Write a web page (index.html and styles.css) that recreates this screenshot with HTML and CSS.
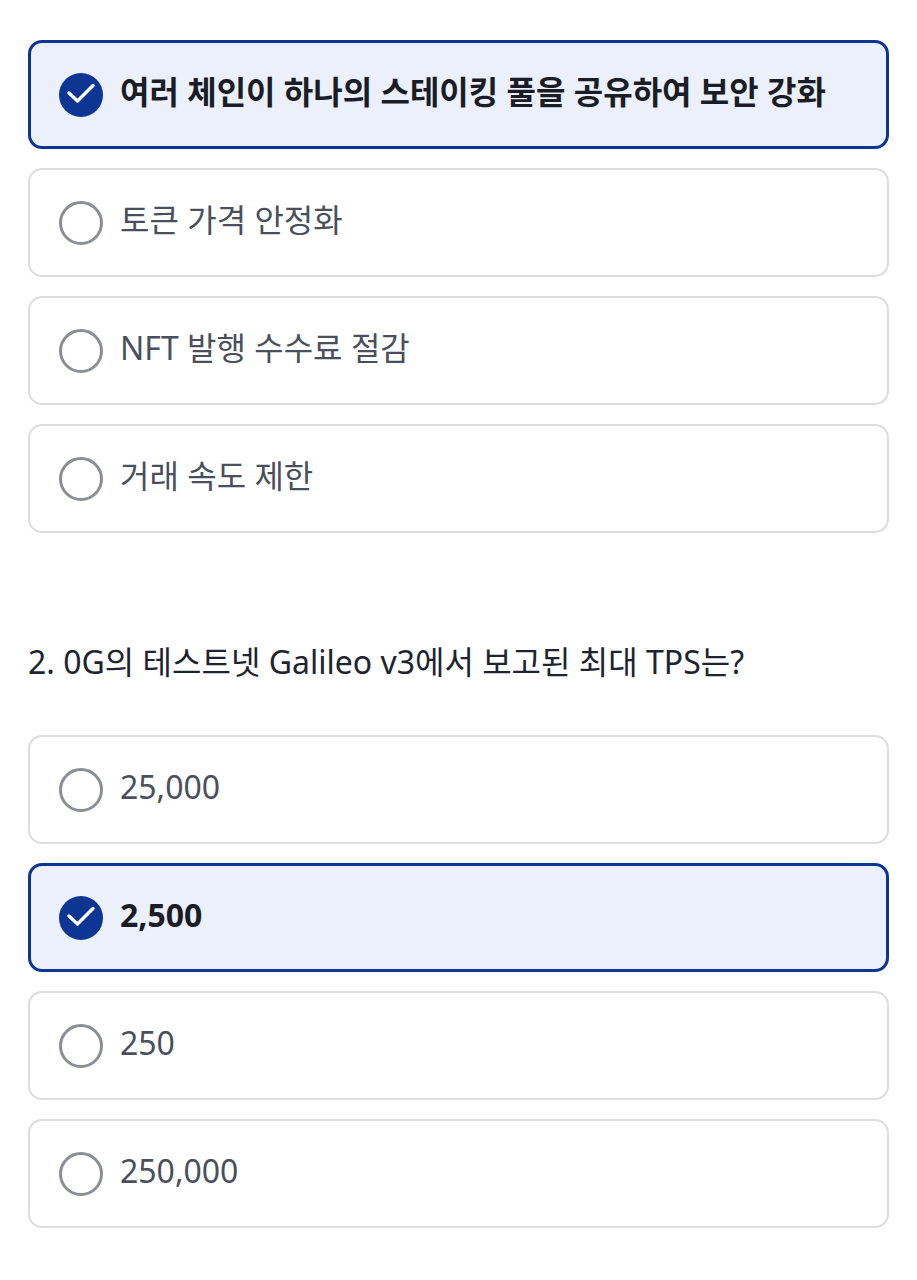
FILE: index.html
```html
<!DOCTYPE html>
<html lang="ko">
<head>
<meta charset="utf-8">
<link rel="stylesheet" href="styles.css">
</head>
<body>
<main class="quiz">
  <section class="question">
    <div class="options">
      <div class="option selected">
        <span class="mark checked"><svg viewBox="0 0 44 44"><circle cx="22" cy="22" r="22" fill="#0c3594"/><path d="M10 20 L18.5 28 L34 12.5" fill="none" stroke="#fff" stroke-width="3.4" stroke-linecap="round" stroke-linejoin="round"/></svg></span>
        <span class="label">여러 체인이 하나의 스테이킹 풀을 공유하여 보안 강화</span>
      </div>
      <div class="option">
        <span class="mark"></span>
        <span class="label">토큰 가격 안정화</span>
      </div>
      <div class="option">
        <span class="mark"></span>
        <span class="label">NFT 발행 수수료 절감</span>
      </div>
      <div class="option">
        <span class="mark"></span>
        <span class="label">거래 속도 제한</span>
      </div>
    </div>
  </section>
  <section class="question">
    <h2 class="title">2. 0G의 테스트넷 Galileo v3에서 보고된 최대 TPS는?</h2>
    <div class="options">
      <div class="option">
        <span class="mark"></span>
        <span class="label">25,000</span>
      </div>
      <div class="option selected">
        <span class="mark checked"><svg viewBox="0 0 44 44"><circle cx="22" cy="22" r="22" fill="#0c3594"/><path d="M10 20 L18.5 28 L34 12.5" fill="none" stroke="#fff" stroke-width="3.4" stroke-linecap="round" stroke-linejoin="round"/></svg></span>
        <span class="label">2,500</span>
      </div>
      <div class="option">
        <span class="mark"></span>
        <span class="label">250</span>
      </div>
      <div class="option">
        <span class="mark"></span>
        <span class="label">250,000</span>
      </div>
    </div>
  </section>
</main>
</body>
</html>
```

FILE: styles.css
```css
html, body {
  margin: 0;
  padding: 0;
  background: #ffffff;
}
body {
  font-family: "Noto Sans", "Noto Sans CJK KR", sans-serif;
}
.quiz {
  padding: 40px 28px 0 28px;
  display: flex;
  flex-direction: column;
  gap: 106px;
}
.question {
  display: flex;
  flex-direction: column;
}
.title {
  margin: 0 0 50px 0;
  font-size: 32px;
  font-weight: 400;
  color: #1e2330;
  line-height: 46px;
}
.options {
  display: flex;
  flex-direction: column;
  gap: 19px;
}
.option {
  box-sizing: border-box;
  height: 109px;
  border: 2px solid #dcdde0;
  border-radius: 14px;
  background: #ffffff;
  display: flex;
  align-items: center;
  padding-left: 29px;
  gap: 17px;
}
.option.selected {
  border: 3px solid #0c3594;
  background: #ebf0fb;
  padding-left: 28px;
}
.mark {
  box-sizing: border-box;
  width: 44px;
  height: 44px;
  flex: 0 0 44px;
  border-radius: 50%;
  border: 3px solid #8b8e95;
}
.mark.checked {
  border: none;
}
.mark svg {
  display: block;
  width: 44px;
  height: 44px;
}
.label {
  font-size: 32px;
  line-height: 40px;
  color: #4a4f5c;
  position: relative;
  top: -3px;
}
.selected .label {
  font-weight: 700;
  color: #1a1d26;
}
```
